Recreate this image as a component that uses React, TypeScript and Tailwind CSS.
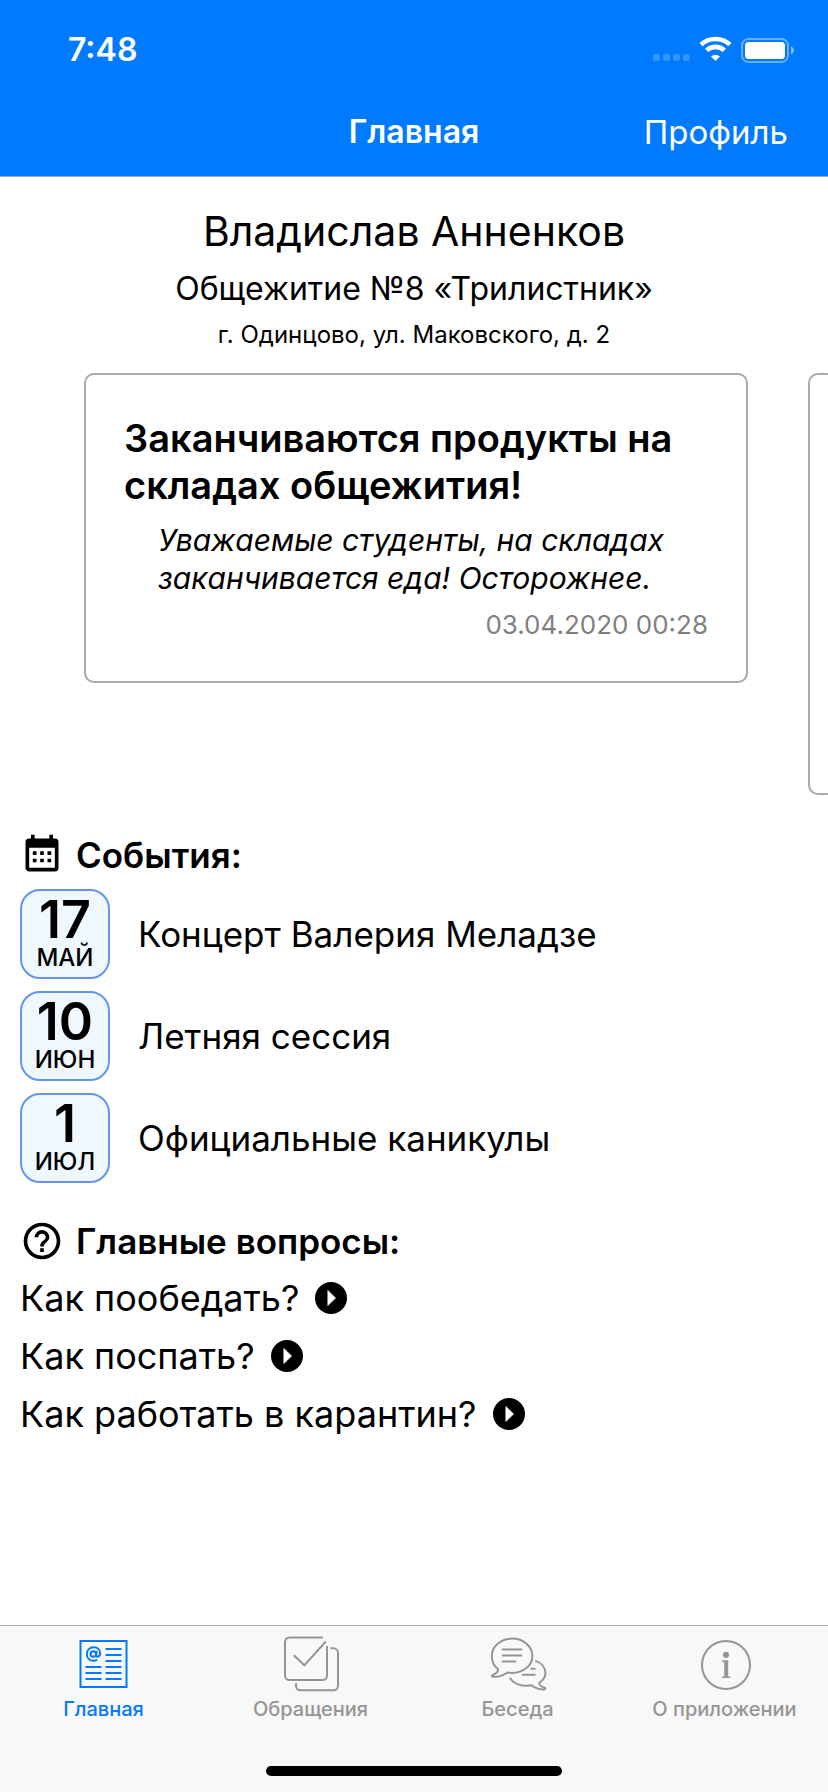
import type { ReactNode } from "react";

const events = [
  { day: "17", month: "МАЙ", title: "Концерт Валерия Меладзе" },
  { day: "10", month: "ИЮН", title: "Летняя сессия" },
  { day: "1", month: "ИЮЛ", title: "Официальные каникулы" },
];

const questions = ["Как пообедать?", "Как поспать?", "Как работать в карантин?"];

function StatusIcons() {
  return (
    <svg className="h-7 w-36" viewBox="0 0 144 28" fill="#fff" aria-hidden="true">
      <g opacity="0.2">
        <rect x="3" y="18" width="7" height="7" rx="2" />
        <rect x="13" y="18" width="7" height="7" rx="2" />
        <rect x="23" y="18" width="7" height="7" rx="2" />
        <rect x="33" y="18" width="7" height="7" rx="2" />
      </g>
      <g fill="none" stroke="#fff" strokeWidth="4.6">
        <path d="M51 8.6A21.4 21.4 0 0 1 80 8.6" />
        <path d="M56.6 14.4A13 13 0 0 1 74.4 14.4" />
      </g>
      <path d="M65.500 25l-4.500-4.600a6.600 6.600 0 0 1 9 0z" />
      <rect x="92" y="3" width="46" height="23" rx="6.500" fill="none" stroke="#fff" strokeOpacity="0.4" strokeWidth="2" />
      <rect x="95" y="6" width="40" height="17" rx="3.500" />
      <path d="M141 10.500c2 .8 3 2.200 3 4s-1 3.200-3 4z" opacity="0.5" />
    </svg>
  );
}

function CalendarIcon() {
  return (
    <svg className="size-11" viewBox="0 0 24 24" aria-hidden="true">
      <path d="M9 10V12H7V10H9M13 10V12H11V10H13M17 10V12H15V10H17M19 3A2 2 0 0 1 21 5V19A2 2 0 0 1 19 21H5C3.89 21 3 20.1 3 19V5A2 2 0 0 1 5 3H6V1H8V3H16V1H18V3H19M19 19V8H5V19H19M9 14V16H7V14H9M13 14V16H11V14H13M17 14V16H15V14H17Z" />
    </svg>
  );
}

function HelpIcon() {
  return (
    <svg className="size-11" viewBox="0 0 24 24" aria-hidden="true">
      <path d="M11,18H13V16H11V18M12,2A10,10 0 0,0 2,12A10,10 0 0,0 12,22A10,10 0 0,0 22,12A10,10 0 0,0 12,2M12,20C7.59,20 4,16.41 4,12C4,7.59 7.59,4 12,4C16.41,4 20,7.59 20,12C20,16.41 16.41,20 12,20M12,6A4,4 0 0,0 8,10H10A2,2 0 0,1 12,8A2,2 0 0,1 14,10C14,12 11,11.75 11,15H13C13,12.75 16,12.5 16,10A4,4 0 0,0 12,6Z" />
    </svg>
  );
}

function PlayIcon() {
  return (
    <svg className="size-8" viewBox="0 0 32 32" aria-hidden="true">
      <circle cx="16" cy="16" r="16" />
      <path d="M12.800 8.400L20.600 16l-7.800 7.600z" fill="#fff" stroke="#fff" strokeWidth="0.600" strokeLinejoin="round" />
    </svg>
  );
}

function NewsIcon() {
  return (
    <svg className="size-15" viewBox="0.5 0 60 60" fill="none" stroke="currentColor" strokeWidth="2" aria-hidden="true">
      <rect x="7" y="7" width="46" height="46" />
      <path d="M32 15h16M32 21h16M32 27h16M32 33h16M32 39h16M32 45h16M12 33h16M12 39h16M12 45h16" />
      <circle cx="19.800" cy="20" r="2.800" />
      <path d="M23.200 16.800l-.6 4.600c0 2.400 4 1.600 4-2.200 0-4-3-6-6.400-6-4 0-6.800 3-6.800 6.800 0 4.200 2.800 6.800 6.600 6.800 1.400 0 2.600-.3 3.800-.9" />
    </svg>
  );
}

function ChecksIcon() {
  return (
    <svg className="size-15" viewBox="0 0 60 60" fill="none" stroke="currentColor" strokeWidth="2" aria-hidden="true">
      <path d="M42 3.500H8.500a4.500 4.500 0 0 0-4.500 4.500v33.500a4.500 4.500 0 0 0 4.500 4.500h33a4.500 4.500 0 0 0 4.500-4.500V12" />
      <path d="M12.800 21.300l10.500 10L44.800 7.500" />
      <path d="M49.500 14.300h3a4.500 4.500 0 0 1 4.500 4.500v33a4.500 4.500 0 0 1-4.500 4.500h-33a4.500 4.500 0 0 1-4.500-4.500v-2.500" />
    </svg>
  );
}

function ChatIcon() {
  return (
    <svg className="size-15" viewBox="0 0 60 60" fill="none" stroke="currentColor" strokeWidth="2" strokeLinejoin="round" aria-hidden="true">
      <path d="M10.200 35.200C6 32 3.800 27.400 3.800 22.200 3.800 12.400 12.600 4.600 24 4.600s20.400 7.800 20.400 17.400S35.400 39 24 39c-1.800 0-2.800-.1-4.400-.5-4.600 3-9.800 4.700-14.600 4.300-1.400-.2-1.400-1.400-.2-1.900 3.400-1.400 5.400-3.400 5.400-5.700z" />
      <path d="M13.800 15.400h20.400M13.800 21.400h20.400M13.800 27.600h14.400M42.500 34.700h5M34 40.700h13.500" />
      <path d="M47.200 26.600c6 2.200 10.300 7 10.300 12.400 0 4-2.400 7.200-6.300 10 .2 2.200 2 3.600 5.200 4.600 1.400.5 1.200 1.600-.2 1.800-4.400.4-8.800-1.200-12.800-4.100-9 1.700-17.400-1-21.600-7.600" />
    </svg>
  );
}

function InfoIcon() {
  return (
    <svg className="size-15" viewBox="0 0 60 60" fill="currentColor" aria-hidden="true">
      <circle cx="31" cy="31" r="24" fill="none" stroke="currentColor" strokeWidth="2" />
      <circle cx="31" cy="20.800" r="3.100" />
      <path d="M27 26.200h6.200v16.300h2V44H27v-1.500h2.200V27.700H27z" />
    </svg>
  );
}

function SectionHeading({ icon, children }: { icon: ReactNode; children: ReactNode }) {
  return (
    <h2 className="flex items-center gap-3 text-[35px] leading-[44px] font-semibold">
      {icon}
      {children}
    </h2>
  );
}

function Tab({ icon, label, active = false }: { icon: ReactNode; label: string; active?: boolean }) {
  return (
    <a
      href="#"
      aria-current={active ? "page" : undefined}
      className={`flex flex-1 flex-col items-center text-[20px] leading-[30px] font-medium whitespace-nowrap ${
        active ? "text-[#007aff]" : "text-[#959595]"
      }`}
    >
      {icon}
      {label}
    </a>
  );
}

export default function App() {
  return (
    <div className="flex min-h-screen flex-col overflow-x-hidden bg-white font-['Inter','Liberation_Sans',sans-serif] text-black">
      <header className="border-b border-[#a7a7aa] bg-[#007aff] text-white">
        <div className="flex h-[88px] items-center justify-between pt-3 pr-[34px] pl-[68px]">
          <time className="text-[32px] leading-10 font-semibold">7:48</time>
          <StatusIcons />
        </div>
        <div className="grid h-[88px] grid-cols-[1fr_auto_1fr] items-center px-10">
          <span />
          <h1 className="text-center text-[32px] leading-10 font-semibold">Главная</h1>
          <button type="button" className="justify-self-end text-[33px] leading-10">
            Профиль
          </button>
        </div>
      </header>

      <main className="flex-1">
        <section className="flex flex-col items-center pt-7 text-center">
          <p className="text-[41px] leading-[52px]">Владислав Анненков</p>
          <p className="mt-3 text-[32px] leading-10">Общежитие №8 «Трилистник»</p>
          <p className="mt-[10px] text-[24px] leading-8">г. Одинцово, ул. Маковского, д. 2</p>
        </section>

        <section aria-label="Объявления" className="mt-[22px] flex items-start gap-15 overflow-hidden pl-21">
          <article className="shrink-0 basis-[calc(100%-80px)] rounded-[10px] border-2 border-[#a9a9a9] px-[38px] py-10">
            <h2 className="text-[38px] leading-[47px] font-semibold">Заканчиваются продукты на складах общежития!</h2>
            <p className="mt-3 pl-[34px] text-[30px] leading-[38px] italic">
              Уважаемые студенты, на складах заканчивается еда! Осторожнее.
            </p>
            <p className="mt-3 text-right text-[26px] leading-8 text-[#808080]">03.04.2020 00:28</p>
          </article>
          <article className="h-[422px] shrink-0 basis-[calc(100%-80px)] rounded-[10px] border-2 border-[#a9a9a9]" />
        </section>

        <section className="px-5 pt-[38px]">
          <SectionHeading icon={<CalendarIcon />}>События:</SectionHeading>
          <ul className="mt-3 flex flex-col gap-3">
            {events.map((event) => (
              <li key={event.title} className="flex items-center gap-7">
                <div className="flex size-[90px] shrink-0 flex-col items-center justify-center rounded-[20px] border-2 border-[#6495ed] bg-[#f0f8ff]">
                  <span className="text-[52px] leading-[48px] font-semibold">{event.day}</span>
                  <span className="text-[24px] leading-7 font-medium">{event.month}</span>
                </div>
                <span className="text-[35px] leading-[44px]">{event.title}</span>
              </li>
            ))}
          </ul>
        </section>

        <section className="px-5 pt-9">
          <SectionHeading icon={<HelpIcon />}>Главные вопросы:</SectionHeading>
          <ul className="mt-[6px]">
            {questions.map((question) => (
              <li key={question}>
                <button type="button" className="flex items-center gap-4 text-[36px] leading-[58px]">
                  {question}
                  <PlayIcon />
                </button>
              </li>
            ))}
          </ul>
        </section>
      </main>

      <footer className="border-t border-[#b2b2b2] bg-[#f8f8f8] pt-2 pb-4">
        <nav className="flex">
          <Tab icon={<NewsIcon />} label="Главная" active />
          <Tab icon={<ChecksIcon />} label="Обращения" />
          <Tab icon={<ChatIcon />} label="Беседа" />
          <Tab icon={<InfoIcon />} label="О приложении" />
        </nav>
        <div className="mx-auto mt-[42px] h-[10px] w-[296px] rounded-full bg-black" />
      </footer>
    </div>
  );
}
